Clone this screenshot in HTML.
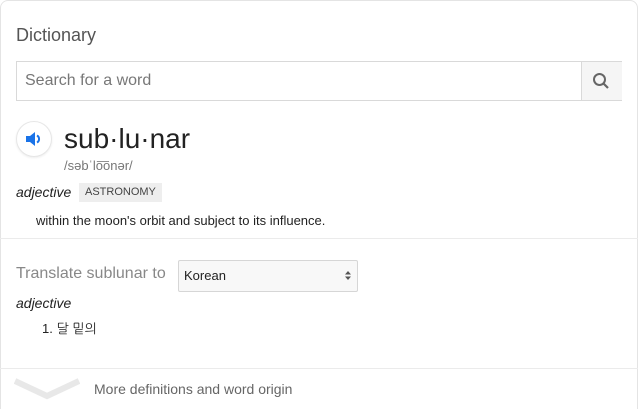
<!DOCTYPE html>
<html><head><meta charset="utf-8"><style>
html,body{margin:0;width:638px;height:409px;overflow:hidden}
body{background:#fff;font-family:"Liberation Sans",Arial,sans-serif;position:relative}
.card{position:absolute;left:0;top:0;width:636px;height:420px;border:1px solid #e4e4e4;border-radius:8px}
.a{position:absolute;white-space:nowrap}
</style></head><body>
<div class="card"></div>
<div class="a" style="left:16px;top:25px;font-size:18px;color:#555">Dictionary</div>
<div class="a" style="left:16px;top:61px;width:604px;height:38px;border:1px solid #d9d9d9;"></div>
<div class="a" style="left:581px;top:62px;width:40px;height:38px;background:#f5f5f5;border-left:1px solid #d9d9d9"></div>
<svg class="a" style="left:591px;top:71px" width="20" height="20" viewBox="0 0 20 20"><circle cx="8.5" cy="8.5" r="5.5" fill="none" stroke="#666" stroke-width="2"/><path d="M12.5 12.5L17 17" stroke="#666" stroke-width="2.2"/></svg>
<div class="a" style="left:25px;top:72px;font-size:16px;color:#777">Search for a word</div>
<div class="a" style="left:16px;top:121px;width:34px;height:34px;border-radius:50%;border:1px solid #e6e6e6;box-shadow:0 1px 2px rgba(0,0,0,.08)"></div>
<svg class="a" style="left:24px;top:130px" width="20" height="18" viewBox="0 0 20 18"><path d="M2 6h4l5-4v14l-5-4H2z" fill="#1a73e8"/><path d="M13 5.5a4 4 0 0 1 0 7" fill="none" stroke="#1a73e8" stroke-width="2"/></svg>
<div class="a" style="left:64px;top:123px;font-size:28px;color:#222">sub·lu·nar</div>
<div class="a" style="left:64px;top:158px;font-size:13px;color:#777">/səbˈlo͞onər/</div>
<div class="a" style="left:16px;top:184px;font-size:14px;font-style:italic;color:#222">adjective</div>
<div class="a" style="left:79px;top:183px;height:19px;line-height:19px;padding:0 6px;background:#eee;font-size:11px;color:#444">ASTRONOMY</div>
<div class="a" style="left:36px;top:213px;font-size:13px;color:#222">within the moon's orbit and subject to its influence.</div>
<div class="a" style="left:0;top:238px;width:638px;height:1px;background:#ebebeb"></div>
<div class="a" style="left:16px;top:265px;font-size:16px;color:#888">Translate sublunar to</div>
<div class="a" style="left:178px;top:260px;width:178px;height:30px;border:1px solid #d6d6d6;background:#f8f8f8;border-radius:2px"></div>
<div class="a" style="left:184px;top:268px;font-size:13px;color:#222">Korean</div>
<svg class="a" style="left:344px;top:270px" width="8" height="11" viewBox="0 0 8 11"><path d="M4 1L7 4.5H1zM4 10L7 6.5H1z" fill="#555"/></svg>
<div class="a" style="left:16px;top:295px;font-size:14px;font-style:italic;color:#222">adjective</div>
<div class="a" style="left:42px;top:321px;font-size:13px;color:#222;font-family:'Liberation Sans','NanumGothic',sans-serif">1. 달 밑의</div>
<div class="a" style="left:0;top:368px;width:638px;height:1px;background:#ebebeb"></div>
<svg class="a" style="left:14px;top:377px" width="66" height="24" viewBox="0 0 66 24"><path d="M1 4L33 19L65 4" fill="none" stroke="#e8e8e8" stroke-width="6"/></svg>
<div class="a" style="left:94px;top:381px;font-size:14px;color:#666">More definitions and word origin</div>
</body></html>
